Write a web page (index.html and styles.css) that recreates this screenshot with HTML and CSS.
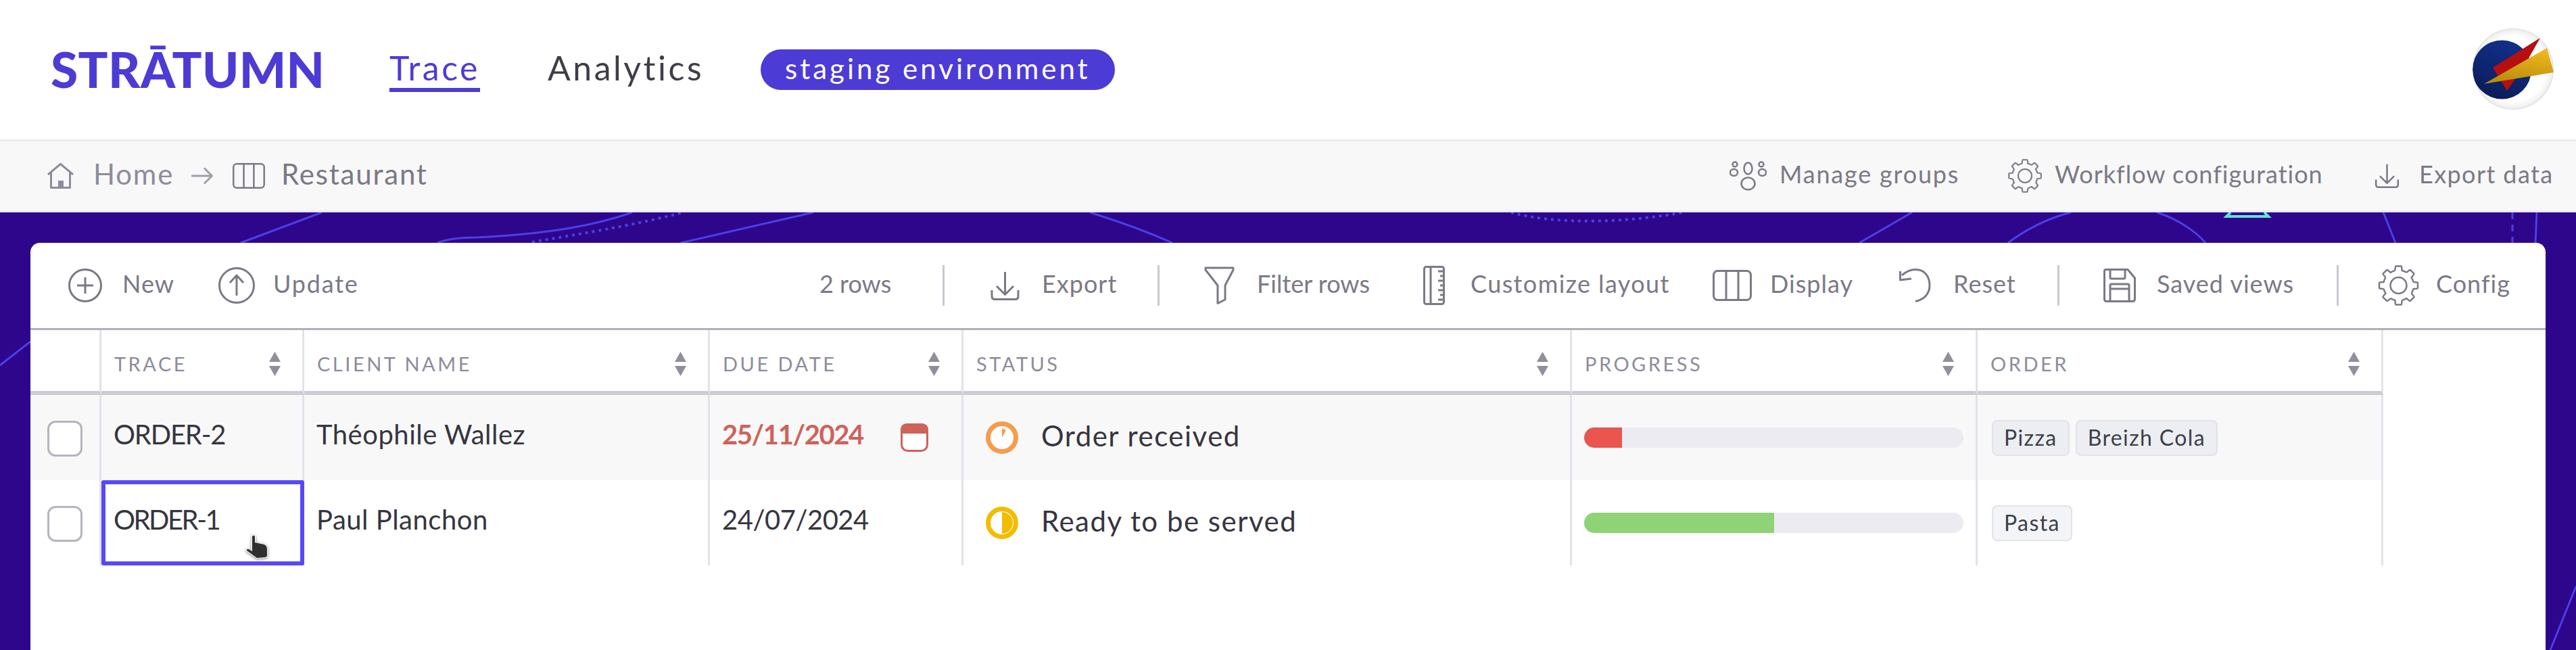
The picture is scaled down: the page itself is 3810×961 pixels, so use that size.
FILE: index.html
```html
<!DOCTYPE html>
<html lang="en">

<head>
    <meta charset="UTF-8">
    <meta name="viewport" content="width=device-width, initial-scale=1.0">
    <title>Trace - Restaurant</title>
    <link rel="stylesheet" href="styles.css">
</head>

<body>
    <!-- shared icons -->
    <svg class="icon-defs" aria-hidden="true">
        <defs>
            <path id="gear-seg" d="M9.98 3.23 Q10 .6 10.4 .6 H13.6 Q14 .6 14.02 3.23 Q15.6 3.6 16.77 4.37"/>
            <symbol id="ic-gear" viewBox="0 0 24 24">
                <use href="#gear-seg"/>
                <use href="#gear-seg" transform="rotate(45 12 12)"/>
                <use href="#gear-seg" transform="rotate(90 12 12)"/>
                <use href="#gear-seg" transform="rotate(135 12 12)"/>
                <use href="#gear-seg" transform="rotate(180 12 12)"/>
                <use href="#gear-seg" transform="rotate(225 12 12)"/>
                <use href="#gear-seg" transform="rotate(270 12 12)"/>
                <use href="#gear-seg" transform="rotate(315 12 12)"/>
                <circle cx="12" cy="12" r="4.8"/>
            </symbol>
            <symbol id="ic-export" viewBox="0 0 43 43">
                <path d="M21.5 1V34M9 22l12.5 12.5L34 22"/>
                <path d="M2 28v9q0 4.500 4.500 4.500h30q4.500 0 4.500-4.500v-9"/>
            </symbol>
            <symbol id="ic-columns" viewBox="0 0 58 46">
                <rect x="1.500" y="1.500" width="55" height="43" rx="6"/>
                <path d="M20 1.500v43M38 1.500v43"/>
            </symbol>
            <symbol id="ic-sort" viewBox="0 0 17 36">
                <path class="solid" d="M8.500 0L17 15H0zM0 21h17L8.500 36z"/>
            </symbol>
        </defs>
    </svg>

    <header class="topbar">
        <span class="logo">STRĀTUMN</span>
        <a class="nav-link active">Trace</a>
        <a class="nav-link">Analytics</a>
        <span class="env-badge">staging environment</span>
        <svg class="avatar" viewBox="0 0 120 120">
            <defs>
                <radialGradient id="avatarBg" cx="50%" cy="50%" r="50%">
                    <stop offset="80%" stop-color="#ffffff"/>
                    <stop offset="96%" stop-color="#f0f0f0"/>
                    <stop offset="100%" stop-color="#dcdcdc"/>
                </radialGradient>
                <linearGradient id="avatarBlue" x1="0.7" y1="0" x2="0.3" y2="1">
                    <stop offset="0%" stop-color="#12308c"/>
                    <stop offset="100%" stop-color="#0a1c58"/>
                </linearGradient>
                <linearGradient id="avatarGold" x1="0.7" y1="0" x2="0.4" y2="1">
                    <stop offset="0%" stop-color="#f0b91c"/>
                    <stop offset="100%" stop-color="#b98c0c"/>
                </linearGradient>
                <clipPath id="avatarClip"><circle cx="60" cy="60" r="60"/></clipPath>
            </defs>
            <circle cx="60" cy="60" r="60" fill="url(#avatarBg)"/>
            <g clip-path="url(#avatarClip)">
                <circle cx="43.500" cy="61" r="43.500" fill="url(#avatarBlue)"/>
                <path d="M100 14L30 58L51 92L63 75L83 44z" fill="#b50f10"/>
                <path d="M17 82L110 29L120 65z" fill="url(#avatarGold)"/>
            </g>
        </svg>
    </header>

    <nav class="subbar">
        <div class="crumbs">
            <svg class="ic ic-home" viewBox="0 0 39 38">
                <path d="M1 17L19.500 1.500L38 17M5.500 14v22.500h28V14"/>
                <rect class="solid" x="16" y="26" width="8" height="10"/>
            </svg>
            <a class="lbl crumb-home">Home</a>
            <svg class="ic ic-arrow" viewBox="0 0 33 26">
                <path d="M1 13H31M20 1.500L31.500 13L20 24.500"/>
            </svg>
            <svg class="ic ic-crumb-cols"><use href="#ic-columns"/></svg>
            <a class="lbl crumb-current">Restaurant</a>
        </div>
        <div class="sub-actions">
            <a class="sub-action">
                <svg class="ic ic-groups" viewBox="0 0 55 44">
                    <ellipse cx="27.500" cy="11" rx="6" ry="8.500"/>
                    <ellipse cx="27.500" cy="33.500" rx="10" ry="9"/>
                    <circle cx="8" cy="5" r="3.500"/>
                    <ellipse cx="6.500" cy="17" rx="5.500" ry="5"/>
                    <circle cx="47" cy="5" r="3.500"/>
                    <ellipse cx="48.500" cy="17" rx="5.500" ry="5"/>
                </svg>
                <span class="lbl wide">Manage groups</span>
            </a>
            <a class="sub-action">
                <svg class="ic ic-sub-gear"><use href="#ic-gear"/></svg>
                <span class="lbl">Workflow configuration</span>
            </a>
            <a class="sub-action">
                <svg class="ic ic-sub-export"><use href="#ic-export"/></svg>
                <span class="lbl wide-sm">Export data</span>
            </a>
        </div>
    </nav>

    <main class="stage">
        <!-- background line art -->
        <svg class="stage-lines" viewBox="0 314 3810 647">
            <path d="M356 359L476 314M0 540L45 505M1007 359L1203 314M1612 314Q1680 335 1734 359"/>
            <path d="M647 359C665 352 685 351 705 351C780 347 860 340 935 314"/>
            <path class="dots" d="M787 358C860 345 930 335 1010 314M2235 314C2300 332 2400 330 2490 314"/>
            <path d="M2750 359L2828 314M2970 359C2995 340 3030 322 3063 314M3190 314C3225 325 3250 345 3262 359"/>
            <path d="M3525 314L3543 359M3752 314L3750 359M3772 961L3810 867"/>
            <path class="dashes" d="M3716 314V359"/>
            <path class="teal" d="M3299 314L3293 320H3355L3349 314"/>
        </svg>

        <section class="card">
            <div class="toolbar">
                <a class="tool">
                    <svg class="ic ic-new" viewBox="0 0 50 50">
                        <circle cx="25" cy="25" r="23.500"/>
                        <path d="M25 13V37M13 25H37"/>
                    </svg>
                    <span class="lbl">New</span>
                </a>
                <a class="tool">
                    <svg class="ic ic-update" viewBox="0 0 54 54">
                        <circle cx="27" cy="27" r="25.500"/>
                        <path d="M27 12V42M17 23L27 12L37 23"/>
                    </svg>
                    <span class="lbl wide">Update</span>
                </a>
                <span class="tool"><span class="lbl narrow">2 rows</span></span>
                <span class="sep"></span>
                <a class="tool">
                    <svg class="ic ic-export"><use href="#ic-export"/></svg>
                    <span class="lbl">Export</span>
                </a>
                <span class="sep"></span>
                <a class="tool">
                    <svg class="ic ic-filter" viewBox="0 0 45 56">
                        <path d="M2 2H43V5L31 28V49L20 54.500V28L2 5z"/>
                    </svg>
                    <span class="lbl narrow">Filter rows</span>
                </a>
                <a class="tool">
                    <svg class="ic ic-ruler" viewBox="0 0 32 58">
                        <rect x="1.500" y="1.500" width="29" height="55" rx="3"/>
                        <path d="M11 1.500v55M30 8H22M30 15H25M30 22H22M30 29H25M30 36H22M30 43H25M30 50H22"/>
                    </svg>
                    <span class="lbl wide-sm">Customize layout</span>
                </a>
                <a class="tool">
                    <svg class="ic ic-display"><use href="#ic-columns"/></svg>
                    <span class="lbl">Display</span>
                </a>
                <a class="tool">
                    <svg class="ic ic-reset" viewBox="0 0 47 50">
                        <path d="M4 10C12 3 19 1.500 24 1.500C38 1.500 45 12 45 25C45 38 36 46 24 48.500"/>
                        <path d="M1.500 4V17L18 15"/>
                    </svg>
                    <span class="lbl">Reset</span>
                </a>
                <span class="sep"></span>
                <a class="tool">
                    <svg class="ic ic-save" viewBox="0 0 48 50">
                        <path d="M4 1.500H36L46.500 14V45Q46.500 48.500 43 48.500H5Q1.500 48.500 1.500 45V4Q1.500 1.500 4 1.500z"/>
                        <path d="M10 1.500V13Q10 15 12 15H30Q32 15 32 13V1.500"/>
                        <path d="M10 48.500V25Q10 23 12 23H36Q38 23 38 25V48.500M10 30H38"/>
                    </svg>
                    <span class="lbl">Saved views</span>
                </a>
                <span class="sep"></span>
                <a class="tool">
                    <svg class="ic ic-config"><use href="#ic-gear"/></svg>
                    <span class="lbl">Config</span>
                </a>
            </div>

            <table class="grid">
                <colgroup>
                    <col class="col-check">
                    <col class="col-trace">
                    <col class="col-client">
                    <col class="col-date">
                    <col class="col-status">
                    <col class="col-progress">
                    <col class="col-order">
                </colgroup>
                <thead>
                    <tr>
                        <th></th>
                        <th><div class="th-in">Trace <svg class="sort"><use href="#ic-sort"/></svg></div></th>
                        <th><div class="th-in">Client name <svg class="sort"><use href="#ic-sort"/></svg></div></th>
                        <th><div class="th-in">Due date <svg class="sort"><use href="#ic-sort"/></svg></div></th>
                        <th><div class="th-in">Status <svg class="sort"><use href="#ic-sort"/></svg></div></th>
                        <th><div class="th-in">Progress <svg class="sort"><use href="#ic-sort"/></svg></div></th>
                        <th><div class="th-in">Order <svg class="sort"><use href="#ic-sort"/></svg></div></th>
                    </tr>
                </thead>
                <tbody>
                    <tr class="row-odd">
                        <td class="cell-check"><span class="checkbox"></span></td>
                        <td class="cell-text cell-id">ORDER-2</td>
                        <td class="cell-text">Théophile Wallez</td>
                        <td class="cell-text">
                            <div class="date-in late">
                                25/11/2024
                                <svg class="ic-calendar" viewBox="0 0 41 42">
                                    <rect x="1.500" y="1.500" width="38" height="39" rx="9" class="cal-body"/>
                                    <path class="cal-top" d="M10 0H31Q41 0 41 10V15H0V10Q0 0 10 0z"/>
                                </svg>
                            </div>
                        </td>
                        <td>
                            <div class="status">
                                <svg class="ic-status status-orange" viewBox="0 0 48 48">
                                    <circle cx="24" cy="24" r="20.500"/>
                                    <path class="wedge" d="M24 24V10L30 13z"/>
                                </svg>
                                <span class="lbl">Order received</span>
                            </div>
                        </td>
                        <td><div class="bar"><div class="bar-fill bar-red" style="width: 10%"></div></div></td>
                        <td class="cell-tags"><span class="tag">Pizza</span><span class="tag">Breizh Cola</span></td>
                    </tr>
                    <tr>
                        <td class="cell-check"><span class="checkbox"></span></td>
                        <td class="cell-text selected">
                            ORDER-1
                            <svg class="hand" viewBox="0 0 34 36">
                                <path d="M10 3Q12 0 14 3V12L19 13L23 14L28 15Q32 17 32 22V31Q32 34 28 34L17 35L2 24Q1 21 5 22L10 25z"/>
                            </svg>
                        </td>
                        <td class="cell-text">Paul Planchon</td>
                        <td class="cell-text"><div class="date-in date-plain">24/07/2024</div></td>
                        <td>
                            <div class="status">
                                <svg class="ic-status status-yellow" viewBox="0 0 48 48">
                                    <circle cx="24" cy="24" r="20.500"/>
                                    <path class="wedge" d="M24 8A16 16 0 0 1 24 40z"/>
                                </svg>
                                <span class="lbl">Ready to be served</span>
                            </div>
                        </td>
                        <td><div class="bar"><div class="bar-fill bar-green" style="width: 50%"></div></div></td>
                        <td class="cell-tags row2-tags"><span class="tag">Pasta</span></td>
                    </tr>
                </tbody>
            </table>
        </section>
    </main>
</body>

</html>
```
FILE: styles.css
```css
* {
    box-sizing: border-box;
}

html, body {
    height: 100%;
}

body {
    margin: 0;
    font-family: Lato, "Liberation Sans", sans-serif;
    background-color: #ffffff;
    overflow: hidden;
    display: flex;
    flex-direction: column;
}

a {
    color: inherit;
    text-decoration: none;
}

.icon-defs {
    position: absolute;
    width: 0;
    height: 0;
}

.ic {
    flex: none;
    fill: none;
    stroke: currentColor;
    stroke-width: 3;
    stroke-linejoin: round;
}

.ic .solid {
    fill: currentColor;
    stroke: none;
}

/* text sits a little above the icon centre */
.lbl {
    padding-bottom: 6px;
}

.wide {
    letter-spacing: 1.8px;
}

.wide-sm {
    letter-spacing: 1.4px;
}

.narrow {
    letter-spacing: 0;
}

/* top bar */
.topbar {
    height: 209px;
    flex: none;
    border-bottom: 3px solid #ecebf2;
    padding: 0 33px 0 75px;
    display: grid;
    grid-template-columns: 501px 234px 315px 1fr auto;
    align-items: center;
}

.logo {
    font-size: 73px;
    font-weight: 900;
    line-height: 1;
    letter-spacing: .4px;
    color: #4d3bd6;
    margin-top: -2px;
}

.nav-link {
    justify-self: start;
    font-size: 50px;
    letter-spacing: 3.5px;
    line-height: 44px;
    color: #3f3e48;
    padding-bottom: 8px;
    border-bottom: 6px solid transparent;
    margin-top: 8px;
}

.nav-link.active {
    color: #4d3bd6;
    border-bottom-color: #4d3bd6;
}

.env-badge {
    justify-self: start;
    height: 60px;
    border-radius: 30px;
    background-color: #4d3bd6;
    color: #ffffff;
    font-size: 42px;
    letter-spacing: 4px;
    line-height: 56px;
    padding: 0 36px;
}

.avatar {
    display: block;
    width: 120px;
    height: 120px;
    margin-top: -2px;
}

/* breadcrumb bar */
.subbar {
    height: 105px;
    flex: none;
    background-color: #f8f8f8;
    border-bottom: 3px solid #ecebf2;
    padding-left: 70px;
    display: flex;
    align-items: center;
    justify-content: space-between;
}

.crumbs {
    display: flex;
    align-items: center;
    font-size: 42px;
    letter-spacing: 1.8px;
    color: #8e8c9b;
}

.ic-home {
    width: 39px;
    height: 38px;
    margin-right: 29px;
}

.crumb-home {
    width: 144px;
}

.ic-arrow {
    width: 33px;
    height: 26px;
    margin-right: 29px;
    color: #a09eac;
}

.ic-crumb-cols {
    width: 48px;
    height: 38px;
    margin-right: 24px;
    color: #7b7986;
}

.crumb-current {
    color: #7b7986;
}

.sub-actions {
    display: grid;
    grid-template-columns: 412px 542px 298px;
    font-size: 36px;
    letter-spacing: 1px;
    color: #7b7986;
}

.sub-action {
    display: flex;
    align-items: center;
    white-space: nowrap;
}

.ic-groups {
    width: 55px;
    height: 44px;
    margin-right: 19px;
    stroke-width: 2.500;
}

.ic-sub-gear {
    width: 50px;
    height: 50px;
    margin-right: 19px;
    stroke-width: 1;
}

.ic-sub-export {
    width: 37px;
    height: 36px;
    margin-right: 29px;
}

/* main area */
.stage {
    position: relative;
    flex: 1;
    min-height: 0;
    background-color: #2e068c;
    padding: 45px 45px 0;
}

.stage-lines {
    position: absolute;
    left: 0;
    top: 0;
    width: 3810px;
    height: 647px;
    fill: none;
    stroke: #4b3fe6;
    stroke-width: 3;
}

.stage-lines .dots {
    stroke-dasharray: 4 6;
    stroke-width: 4;
}

.stage-lines .dashes {
    stroke-dasharray: 10 8;
}

.stage-lines .teal {
    stroke: #5fe3d3;
    stroke-width: 4;
}

.card {
    position: relative;
    height: 100%;
    background-color: #ffffff;
    border-radius: 14px 14px 0 0;
}

.toolbar {
    height: 129px;
    border-bottom: 3px solid #b0afb9;
    display: grid;
    grid-template-columns: 56px 222px 889px 182px 71px 247px 69px 324px 428px 276px 234px 68px 345px 61px 1fr;
    align-items: center;
    font-size: 36px;
    letter-spacing: 1px;
    color: #7b7986;
}

.toolbar > :first-child {
    grid-column: 2;
}

.tool {
    display: flex;
    align-items: center;
    white-space: nowrap;
}

.sep {
    width: 3px;
    height: 60px;
    background-color: #c9c8d0;
}

.ic-new {
    width: 50px;
    height: 50px;
    margin-right: 30px;
}

.ic-update {
    width: 54px;
    height: 54px;
    margin-right: 27px;
}

.ic-export {
    width: 43px;
    height: 43px;
    margin-right: 33px;
}

.ic-filter {
    width: 45px;
    height: 56px;
    margin-right: 33px;
}

.ic-ruler {
    width: 32px;
    height: 58px;
    margin-right: 38px;
}

.ic-display {
    width: 58px;
    height: 46px;
    margin-right: 27px;
}

.ic-reset {
    width: 47px;
    height: 50px;
    margin-right: 33px;
}

.ic-save {
    width: 48px;
    height: 50px;
    margin-right: 31px;
}

.ic-config {
    width: 61px;
    height: 60px;
    margin-right: 25px;
    stroke-width: 1;
}

/* table */
.grid {
    table-layout: fixed;
    width: 3480px;
    border-collapse: separate;
    border-spacing: 0;
}

.col-check { width: 105px; }
.col-trace { width: 300px; }
.col-client { width: 600px; }
.col-date { width: 375px; }
.col-status { width: 900px; }
.col-progress { width: 600px; }
.col-order { width: 600px; }

th, td {
    padding: 0;
    border-right: 3px solid #e3e2ea;
}

th {
    height: 96px;
    border-bottom: 6px solid #ccccd2;
    font-weight: 400;
    text-align: left;
}

.th-in {
    display: flex;
    align-items: center;
    justify-content: space-between;
    padding: 9px 32px 0 19px;
    font-size: 29px;
    letter-spacing: 3.500px;
    text-transform: uppercase;
    color: #8e8c9b;
}

.sort {
    width: 17px;
    height: 36px;
    fill: #918f9f;
}

td {
    height: 126px;
}

.row-odd td {
    background-color: #f8f8f9;
}

.cell-check {
    padding-left: 25px;
}

.checkbox {
    display: block;
    width: 52px;
    height: 53px;
    margin-top: 2px;
    border: 3px solid #b5b4bf;
    border-radius: 12px;
    background-color: #ffffff;
}

.cell-text {
    padding: 0 18px 10px;
    font-size: 40px;
    color: #36353f;
    letter-spacing: .5px;
}

.cell-id {
    letter-spacing: -1.200px;
}

.selected {
    position: relative;
    letter-spacing: -2.500px;
}

.selected::after {
    content: "";
    position: absolute;
    top: 0;
    right: -3px;
    bottom: 0;
    left: 0;
    border: 6px solid #5549f8;
    border-radius: 3px;
}

.hand {
    position: absolute;
    left: 213px;
    top: 80px;
    width: 34px;
    height: 36px;
    fill: #303030;
    stroke: #ffffff;
    stroke-width: 2;
    paint-order: stroke;
    filter: drop-shadow(0 1px 2px rgba(0, 0, 0, .5));
}

.date-in {
    display: flex;
    align-items: center;
    justify-content: space-between;
    padding-right: 31px;
}

.date-plain {
    letter-spacing: -.500px;
}

.late {
    color: #cd635b;
    font-weight: 700;
    letter-spacing: -1.400px;
}

.ic-calendar {
    width: 41px;
    height: 42px;
    margin-top: 10px;
}

.cal-body {
    fill: #ffffff;
    stroke: #cd635b;
    stroke-width: 3;
}

.cal-top {
    fill: #cd635b;
}

.status {
    display: flex;
    align-items: center;
    gap: 34px;
    padding-left: 33px;
    font-size: 42px;
    letter-spacing: 1.500px;
    color: #36353f;
}

.ic-status {
    width: 48px;
    height: 48px;
    flex: none;
    fill: #ffffff;
    stroke-width: 7;
}

.status-orange {
    stroke: #f59c4e;
}

.status-yellow {
    stroke: #f2bd00;
}

.status-orange .wedge {
    fill: #f59c4e;
    stroke: none;
}

.status-yellow .wedge {
    fill: #f2bd00;
    stroke: none;
}

.bar {
    width: 561px;
    height: 30px;
    margin-left: 18px;
    border-radius: 15px;
    background-color: #ecebf2;
    overflow: hidden;
}

.bar-fill {
    height: 100%;
}

.bar-red {
    background-color: #ea5550;
}

.bar-green {
    background-color: #8fd377;
}

.cell-tags {
    padding-left: 21px;
}

.tag {
    display: inline-block;
    height: 53px;
    margin-right: 9px;
    padding: 0 16px;
    border: 2px solid #e2e2e8;
    border-radius: 8px;
    background-color: #edeef2;
    font-size: 32px;
    line-height: 48px;
    letter-spacing: 1.400px;
    color: #3c4049;
}

.row2-tags .tag {
    background-color: #f3f4f8;
}
```
